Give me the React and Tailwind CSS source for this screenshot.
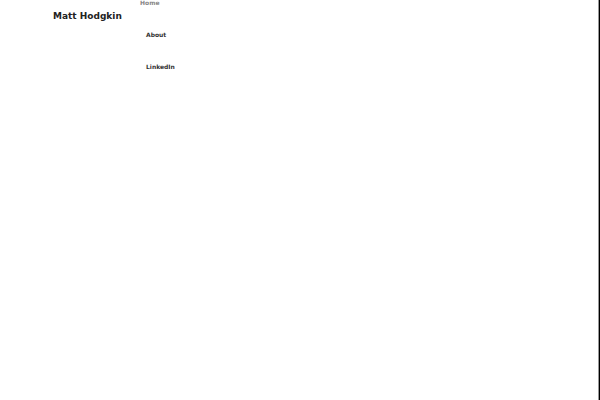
export default function App() {
  return (
    <div className="h-screen overflow-hidden border-r border-black bg-white font-['DejaVu_Sans',sans-serif] font-bold text-[#333333]">
      <div className="flex h-full items-start border-r border-[#999999] pl-[53px]">
        <a href="#" className="mt-1 w-[87px] text-[9px] leading-6 whitespace-nowrap text-[#222222]">
          Matt Hodgkin
        </a>
        <nav>
          <ul className="text-[6px] leading-8">
            <li className="-mt-[13px] text-[#888888]"><a href="#">Home</a></li>
            <li className="pl-1.5"><a href="#about">About</a></li>
            <li className="pl-1.5"><a href="#linkedin">LinkedIn</a></li>
          </ul>
        </nav>
      </div>
    </div>
  );
}
